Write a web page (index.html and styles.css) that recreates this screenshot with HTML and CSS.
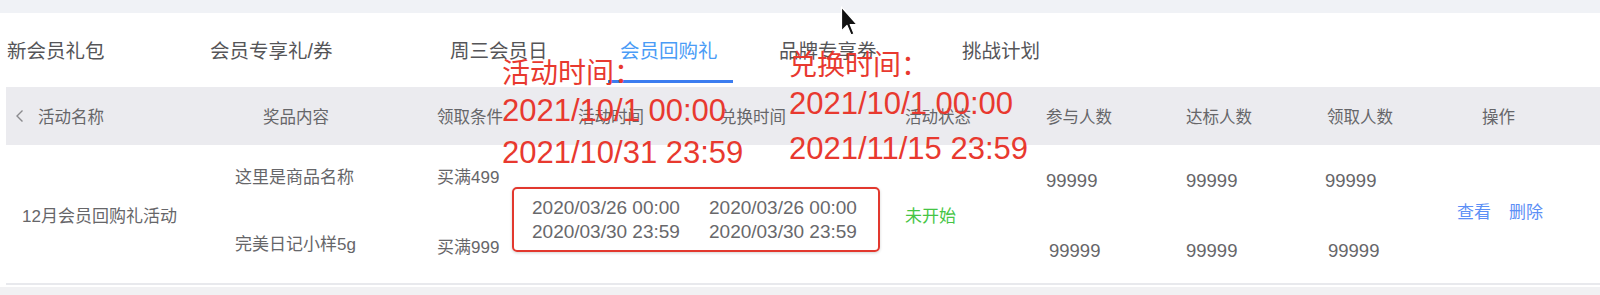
FILE: index.html
```html
<!DOCTYPE html>
<html lang="zh-CN">
<head>
<meta charset="utf-8">
<title>会员回购礼</title>
<link rel="stylesheet" href="styles.css">
</head>
<body>
<div class="page">
  <div class="topbar"></div>
  <nav class="tabs">
    <div class="tab t-new">新会员礼包</div>
    <div class="tab t-excl">会员专享礼/券</div>
    <div class="tab t-wed">周三会员日</div>
    <div class="tab active">会员回购礼</div>
    <div class="tab t-brand">品牌专享券</div>
    <div class="tab">挑战计划</div>
  </nav>
  <div class="table">
    <div class="thead">
      <div class="th th-back"><svg class="chev" width="9" height="14" viewBox="0 0 9 14"><path d="M7.5 1.5 L2 7 L7.5 12.5" fill="none" stroke="#8a8a8e" stroke-width="1.4"/></svg></div>
      <div class="th th-name">活动名称</div>
      <div class="th th-prize">奖品内容</div>
      <div class="th th-cond">领取条件</div>
      <div class="th th-act">活动时间</div>
      <div class="th th-exch">兑换时间</div>
      <div class="th th-status">活动状态</div>
      <div class="th th-join">参与人数</div>
      <div class="th th-reach">达标人数</div>
      <div class="th th-recv">领取人数</div>
      <div class="th th-ops">操作</div>
    </div>
    <div class="trow">
      <div class="td td-name">12月会员回购礼活动</div>
      <div class="td td-stack td-prize"><span>这里是商品名称</span><span>完美日记小样5g</span></div>
      <div class="td td-stack td-cond"><span>买满499</span><span>买满999</span></div>
      <div class="td timebox">
        <span>2020/03/26 00:00</span><span>2020/03/26 00:00</span>
        <span>2020/03/30 23:59</span><span>2020/03/30 23:59</span>
      </div>
      <div class="td td-status">未开始</div>
      <div class="td td-stack td-count c-join"><span>99999</span><span class="shift">99999</span></div>
      <div class="td td-stack td-count c-reach"><span>99999</span><span>99999</span></div>
      <div class="td td-stack td-count c-recv"><span>99999</span><span class="shift">99999</span></div>
      <div class="td td-ops"><a class="op">查看</a><a class="op">删除</a></div>
    </div>
  </div>
  <div class="footer"></div>

  <div class="note note-act">
    <span class="note-cn l1">活动时间：</span>
    <span class="note-num l2">2021/10/1 00:00</span>
    <span class="note-num l3">2021/10/31 23:59</span>
  </div>
  <div class="note note-exch">
    <span class="note-cn l1">兑换时间：</span>
    <span class="note-num l2">2021/10/1 00:00</span>
    <span class="note-num l3">2021/11/15 23:59</span>
  </div>

  <svg class="cursor" width="18" height="34" viewBox="0 0 18 34">
    <path d="M1.5 1 L1.5 25 L7 19.5 L11 29 L14 27.8 L10.2 18.5 L17 18.5 Z" fill="#111" stroke="#fff" stroke-width="1.2" stroke-linejoin="round"/>
  </svg>
</div>
</body>
</html>
```

FILE: styles.css
```css
html, body {
  margin: 0;
  padding: 0;
  background: #fff;
}
body {
  width: 1600px;
  height: 295px;
  overflow: hidden;
  font-family: "Liberation Sans", "Noto Sans CJK SC", sans-serif;
}
.page {
  position: relative;
  width: 1600px;
  height: 295px;
}
.topbar {
  height: 13px;
  background: #f0f2f6;
}

/* tabs */
.tabs {
  display: flex;
  height: 74px;
  box-sizing: border-box;
  padding: 24px 0 0 7px;
  font-size: 19.5px;
  color: #555558;
}
.tab {
  flex: none;
  height: 28px;
  line-height: 28px;
  padding-bottom: 15px;
  border-bottom: 3px solid transparent;
  white-space: nowrap;
}
.t-new { width: 203px; }
.t-excl { width: 240px; }
.t-wed { width: 158px; }
.tab.active {
  width: 113px;
  padding-left: 12px;
  margin-right: 46px;
  color: #4a9cf6;
  border-bottom-color: #3c7df0;
}
.t-brand { width: 183px; }

/* table */
.table {
  margin-left: 6px;
}
.thead {
  display: flex;
  align-items: center;
  height: 58px;
  background: #ebebef;
  font-size: 16.5px;
  color: #666669;
}
.th {
  flex: none;
  white-space: nowrap;
}
.th-back {
  width: 32px;
  box-sizing: border-box;
  padding-left: 9px;
  display: flex;
  align-items: center;
}
.th-name { width: 225px; }
.th-prize { width: 174px; }
.th-cond { width: 141px; }
.th-act { width: 142px; }
.th-exch { width: 185px; }
.th-status { width: 141px; }
.th-join { width: 140px; }
.th-reach { width: 141px; }
.th-recv { width: 155px; }

.trow {
  display: flex;
  height: 138px;
  border-bottom: 2px solid #e8e9ed;
  font-size: 17px;
  color: #666669;
}
.td {
  flex: none;
  white-space: nowrap;
}
.td-name {
  width: 229px;
  box-sizing: border-box;
  padding-left: 16px;
  align-self: center;
}
.td-stack {
  display: flex;
  flex-direction: column;
  justify-content: space-between;
  line-height: 24px;
  box-sizing: border-box;
}
.td-prize {
  width: 202px;
  padding: 21px 0 26px;
}
.td-cond {
  width: 75px;
  padding: 21px 0 23px;
}
.timebox {
  width: 368px;
  box-sizing: border-box;
  align-self: flex-start;
  margin-top: 42px;
  margin-right: 25px;
  border: 2px solid #e2382e;
  border-radius: 5px;
  padding: 7px 0 6px 18px;
  display: grid;
  grid-template-columns: 177px auto;
  line-height: 24px;
  font-size: 19px;
  color: #68686b;
  box-shadow: 0 1px 3px rgba(0, 0, 0, 0.18);
}
.td-status {
  width: 141px;
  align-self: center;
  color: #45c545;
}
.td-count {
  padding: 24px 0 20px;
  font-size: 18.5px;
}
.c-join { width: 140px; }
.c-reach { width: 139px; }
.c-recv { width: 132px; }
.shift { padding-left: 3px; }
.td-ops {
  align-self: center;
  margin-bottom: 8px;
  display: flex;
  gap: 18px;
  color: #5c8ff6;
}
.op {
  cursor: pointer;
}

.footer {
  margin-top: 2px;
  height: 8px;
  background: #f1f1f3;
}

/* red annotations over the screenshot */
.note {
  position: absolute;
  display: flex;
  flex-direction: column;
  white-space: nowrap;
  color: #e8392f;
}
.note-cn {
  font-family: "Noto Sans CJK SC", sans-serif;
  font-size: 28px;
}
.note-num {
  font-family: "Liberation Sans", sans-serif;
  font-size: 31px;
}
.note-act {
  left: 502px;
  top: 50px;
}
.note-act .l1 { line-height: 42px; }
.note-act .l2 { line-height: 37px; }
.note-act .l3 { line-height: 48px; }
.note-exch {
  left: 789px;
  top: 42px;
}
.note-exch .l1 { line-height: 42px; }
.note-exch .l2 { line-height: 40px; }
.note-exch .l3 { line-height: 50px; }

.cursor {
  position: absolute;
  left: 840px;
  top: 6px;
}
```
